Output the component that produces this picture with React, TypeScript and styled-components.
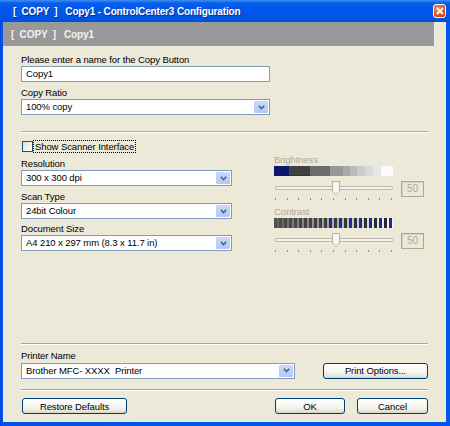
import styled, { createGlobalStyle } from "styled-components"

const GlobalStyle = createGlobalStyle`
	html, body {
		margin: 0;
		padding: 0;
		background: #ffffff;
	}
	body {
		font-family: "Liberation Sans", Arial, sans-serif;
	}
`

const brightness = [
	['#0b1670', 15], ['#414141', 21], ['#6b6b6b', 20], ['#989898', 13], ['#a9a9a9', 7],
	['#bcbcbc', 7], ['#cbcbcb', 8], ['#d9d9d9', 8], ['#e7e7e7', 8], ['#fbfbfb', 13],
] as const

const hex = (v: number) => Math.round(v).toString(16).padStart(2, '0')
const grey = (v: number) => '#' + hex(v) + hex(v) + hex(v)

const BrightnessBar = () => {
	let x = 0
	return (
		<svg width="119" height="10" style={{ display: 'block' }}>
			{brightness.map(([c, w], i) => {
				const r = <rect key={i} x={x} y={0} width={w} height={10} fill={c} />
				x += w
				return r
			})}
			<rect x={15} y={9} width={21} height={1} fill="#1c2b9c" />
		</svg>
	)
}

const ContrastBar = () => (
	<svg width="119" height="10" style={{ display: 'block' }}>
		<rect x={0} y={0} width={119} height={10} fill="#4a4a4a" />
		{Array.from({ length: 24 }).map((_, i) => {
			const t = i / 23
			const light = grey(100 + t * 150)
			const dark = i % 2 === 1 && t > 0.4 ? '#1a2a9a' : grey(78 - t * 40)
			return (
				<g key={i}>
					<rect x={i * 5} y={0} width={3} height={10} fill={dark} />
					<rect x={i * 5 + 3} y={0} width={2} height={10} fill={light} />
				</g>
			)
		})}
	</svg>
)

const Slider = () => (
	<svg width="120" height="22" style={{ display: 'block' }}>
		<rect x={1.5} y={5.5} width={117} height={3} rx={1.5} fill="#f4f3ee" stroke="#b9b7ab" />
		{Array.from({ length: 11 }).map((_, i) => (
			<rect key={i} x={Math.round(1 + i * 11.6)} y={17} width={1} height={2} fill="#8c8c8c" />
		))}
		<path d="M58.5 0.5 h7 v9.5 l-3.5 3.5 l-3.5 -3.5 z" fill="#f7f6f1" stroke="#b3b1a5" />
	</svg>
)

const Arrow = () => (
	<svg width="7" height="5" viewBox="0 0 7 5">
		<path d="M0.8 0.8 L3.5 3.5 L6.2 0.8" fill="none" stroke="#4d6185" strokeWidth="1.6" />
	</svg>
)

const Select = ({ value, width }: { value: string, width: number }) => (
	<SelectBox $width={width}>
		<SelectText>{value}</SelectText>
		<ArrowButton><Arrow /></ArrowButton>
	</SelectBox>
)

const App = () => (
	<>
		<GlobalStyle />
		<Window>
			<TitleBar>
				<TitleText>{'[  COPY  ]   Copy1 - ControlCenter3 Configuration'}</TitleText>
				<CloseButton>
					<svg width="8" height="8" viewBox="0 0 8 8">
						<path d="M1 1 L7 7 M7 1 L1 7" stroke="#ffffff" strokeWidth="1.8" />
					</svg>
				</CloseButton>
			</TitleBar>
			<Body>
				<Header>{'[  COPY  ]   Copy1'}</Header>
				<Content>
					<Label>Please enter a name for the Copy Button</Label>
					<TextBox>Copy1</TextBox>
					<Label $top={4}>Copy Ratio</Label>
					<Select value="100% copy" width={249} />
					<Separator $top={16} />

					<Columns>
						<LeftCol>
							<CheckRow>
								<CheckBox />
								<CheckLabel>Show Scanner Interface</CheckLabel>
							</CheckRow>
							<Label $top={4}>Resolution</Label>
							<Select value="300 x 300 dpi" width={211} />
							<Label $top={4}>Scan Type</Label>
							<Select value="24bit Colour" width={211} />
							<Label $top={3}>Document Size</Label>
							<Select value="A4 210 x 297 mm (8.3 x 11.7 in)" width={211} />
						</LeftCol>
						<RightCol>
							<DimLabel>Brightness</DimLabel>
							<BrightnessBar />
							<SliderRow>
								<Slider />
								<ValueBox>50</ValueBox>
							</SliderRow>
							<DimLabel>Contrast</DimLabel>
							<ContrastBar />
							<SliderRow>
								<Slider />
								<ValueBox>50</ValueBox>
							</SliderRow>
						</RightCol>
					</Columns>

					<Bottom>
						<Separator />
						<Label $top={4}>Printer Name</Label>
						<PrinterRow>
							<Select value="Brother MFC- XXXX  Printer" width={274} />
							<Button $width={105}>Print Options...</Button>
						</PrinterRow>
						<Separator $top={10} />
						<ButtonRow>
							<Button $width={105}>Restore Defaults</Button>
							<Spacer />
							<Button $width={70}>OK</Button>
							<Button $width={71}>Cancel</Button>
						</ButtonRow>
					</Bottom>
				</Content>
			</Body>
		</Window>
	</>
)

export default App

const Window = styled.div`
	width: 450px;
	height: 426px;
	display: flex;
	flex-direction: column;
	box-sizing: border-box;
	background: linear-gradient(90deg, #0831d9 0, #0055e5 1px, #0058ee 100%);
	padding: 0 4px 4px 3px;
	font-size: 9.5px;
	letter-spacing: -0.1px;
	color: #000000;
`
const TitleBar = styled.div`
	height: 22px;
	margin: 0 -4px 0 -3px;
	padding: 0 4px 0 13px;
	display: flex;
	align-items: center;
	background: linear-gradient(180deg, #3d8ff8 0, #0a5fe8 3px, #0058ee 8px, #0054e3 18px, #0050dc 22px);
`
const TitleText = styled.div`
	flex: 1;
	color: #ffffff;
	font-weight: bold;
	font-size: 10px;
	letter-spacing: -0.15px;
	white-space: pre;
	text-shadow: 1px 1px 0 #0a2d9a;
`
const CloseButton = styled.div`
	width: 13px;
	height: 14px;
	box-sizing: border-box;
	border: 1px solid #ffffff;
	border-radius: 3px;
	background: radial-gradient(circle at 30% 30%, #f08a62, #d8481f 70%, #c23a14);
	display: flex;
	align-items: center;
	justify-content: center;
`
const Body = styled.div`
	flex: 1;
	display: flex;
	flex-direction: column;
	background: #ece9d8;
`
const Header = styled.div`
	height: 24px;
	margin-right: 12px;
	padding-left: 8px;
	display: flex;
	align-items: center;
	background: #999999;
	color: #f2f2f2;
	font-weight: bold;
	font-size: 10px;
	letter-spacing: -0.1px;
	white-space: pre;
`
const Content = styled.div`
	flex: 1;
	display: flex;
	flex-direction: column;
	padding: 7px 18px 8px 18px;
`
const Label = styled.div<{ $top?: number }>`
	height: 13px;
	line-height: 13px;
	margin-top: ${p => p.$top ?? 0}px;
	white-space: nowrap;
`
const TextBox = styled.div`
	width: 249px;
	height: 16px;
	box-sizing: border-box;
	border: 1px solid #7f9db9;
	background: #ffffff;
	padding-left: 4px;
	line-height: 14px;
`
const SelectBox = styled.div<{ $width: number }>`
	width: ${p => p.$width}px;
	height: 16px;
	box-sizing: border-box;
	border: 1px solid #7f9db9;
	background: #ffffff;
	display: flex;
	align-items: stretch;
	padding: 1px;
`
const SelectText = styled.div`
	flex: 1;
	padding-left: 3px;
	line-height: 12px;
	white-space: pre;
	overflow: hidden;
`
const ArrowButton = styled.div`
	width: 14px;
	background: linear-gradient(180deg, #c9d9fd, #b4c8f6);
	border-radius: 1px;
	display: flex;
	align-items: center;
	justify-content: center;
`
const Separator = styled.div<{ $top?: number }>`
	height: 0;
	margin-top: ${p => p.$top ?? 0}px;
	border-top: 1px solid #aca899;
	border-bottom: 1px solid #ffffff;
`
const Columns = styled.div`
	display: grid;
	grid-template-columns: 211px 150px;
	column-gap: 42px;
	margin-top: 6px;
`
const LeftCol = styled.div`
	display: flex;
	flex-direction: column;
`
const RightCol = styled.div`
	display: flex;
	flex-direction: column;
	padding-top: 14px;
	color: #aca899;
`
const CheckRow = styled.div`
	height: 14px;
	display: flex;
	align-items: center;
`
const CheckBox = styled.div`
	width: 11px;
	height: 11px;
	margin-left: 1px;
	box-sizing: border-box;
	border: 1px solid #1c5180;
	background: linear-gradient(135deg, #dcdcd7, #ffffff);
`
const CheckLabel = styled.div`
	height: 13px;
	line-height: 12px;
	box-sizing: border-box;
	border: 1px dotted #000000;
	padding: 0 1px;
	white-space: nowrap;
`
const DimLabel = styled.div`
	height: 13px;
	line-height: 13px;
	color: #aca899;
`
const SliderRow = styled.div`
	display: flex;
	align-items: flex-start;
	margin-top: 5px;
	height: 24px;
`
const ValueBox = styled.div`
	margin-left: auto;
	width: 23px;
	height: 16px;
	box-sizing: border-box;
	border: 1px solid #aca899;
	box-shadow: inset 1px 1px 0 #d4d0c8;
	padding-left: 5px;
	line-height: 14px;
	color: #aca899;
	font-size: 10px;
`
const Bottom = styled.div`
	margin-top: auto;
	display: flex;
	flex-direction: column;
`
const PrinterRow = styled.div`
	display: flex;
	align-items: center;
	justify-content: space-between;
	height: 17px;
`
const ButtonRow = styled.div`
	display: flex;
	gap: 12px;
	margin-top: 7px;
	padding-left: 1px;
`
const Spacer = styled.div`
	flex: 1;
`
const Button = styled.div<{ $width: number }>`
	width: ${p => p.$width}px;
	height: 16px;
	box-sizing: border-box;
	border: 1px solid #003c74;
	border-radius: 3px;
	background: linear-gradient(180deg, #ffffff 0, #f4f4f0 60%, #e3e1d8 90%, #d6d0c5 100%);
	display: flex;
	align-items: center;
	justify-content: center;
	white-space: nowrap;
`
